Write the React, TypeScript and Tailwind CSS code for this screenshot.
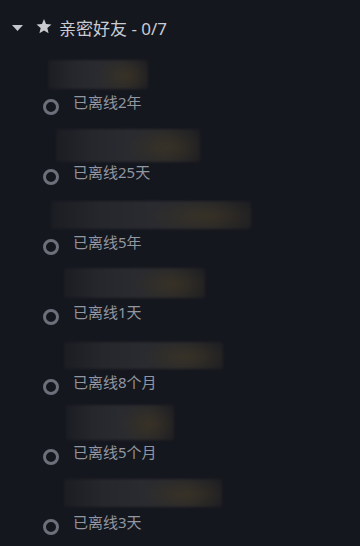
import React from 'react';

type Friend = {
    status: string;
    boxLeft: number;
    boxTop: number;
    boxWidth: number;
    boxHeight: number;
};

const friends: Friend[] = [
    { status: '已离线2年', boxLeft: 48, boxTop: 0, boxWidth: 100, boxHeight: 29 },
    { status: '已离线25天', boxLeft: 56, boxTop: -1, boxWidth: 144, boxHeight: 33 },
    { status: '已离线5年', boxLeft: 51, boxTop: 1, boxWidth: 200, boxHeight: 28 },
    { status: '已离线1天', boxLeft: 64, boxTop: -2, boxWidth: 141, boxHeight: 30 },
    { status: '已离线8个月', boxLeft: 64, boxTop: 2, boxWidth: 159, boxHeight: 27 },
    { status: '已离线5个月', boxLeft: 66, boxTop: -5, boxWidth: 108, boxHeight: 35 },
    { status: '已离线3天', boxLeft: 64, boxTop: -1, boxWidth: 158, boxHeight: 28 },
];

export default function App() {
    return (
        <div
            className="w-[360px] h-[546px] overflow-hidden bg-[#15171e] text-[#c9ccd4]"
            style={{ fontFamily: '"Noto Sans", "Noto Sans CJK SC", sans-serif' }}
        >
            <div className="h-[60px] flex items-center pl-[12px] pb-[2px]">
                <svg width="11" height="6" viewBox="0 0 11 6" className="mt-[-2px]">
                    <path d="M0 0 L11 0 L5.5 6 Z" fill="#c4c6cc" />
                </svg>
                <svg width="16" height="15" viewBox="0 0 24 23" className="ml-[13px] mt-[-5px]">
                    <path
                        d="M12 0 L15.1 7.6 L23.4 8.3 L17.1 13.7 L19 21.8 L12 17.5 L5 21.8 L6.9 13.7 L0.6 8.3 L8.9 7.6 Z"
                        fill="#c8cad0"
                    />
                </svg>
                <span className="ml-[7px] text-[17px] leading-[24px]">亲密好友 - 0/7</span>
            </div>
            <div className="flex flex-col">
                {friends.map((f, i) => (
                    <div key={i} className="h-[70px] flex flex-col">
                        <div className="h-[32px]">
                            <div
                                className="blur-[1px] bg-[radial-gradient(ellipse_30%_70%_at_78%_55%,rgba(70,58,34,0.55)_0%,rgba(70,58,34,0)_100%),linear-gradient(90deg,#1b1d23_0%,#25272c_25%,#2a2b30_50%,#27282c_75%,#1c1d22_100%)]"
                                style={{
                                    marginLeft: f.boxLeft,
                                    marginTop: f.boxTop,
                                    width: f.boxWidth,
                                    height: f.boxHeight,
                                }}
                            />
                        </div>
                        <div className="flex items-start">
                            <div className="ml-[43px] mt-[7px] w-[16px] h-[16px] rounded-full border-[3px] border-[#6d6f7b]" />
                            <span className="ml-[14px] text-[15px] leading-[20px] text-[#9296a0]">
                                {f.status}
                            </span>
                        </div>
                    </div>
                ))}
            </div>
        </div>
    );
}
